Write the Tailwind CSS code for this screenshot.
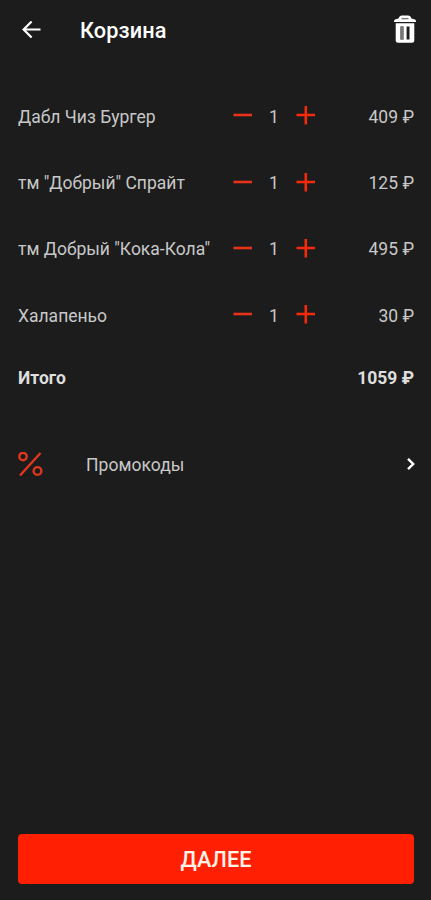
<!DOCTYPE html>
<html lang="ru">
<head>
<meta charset="utf-8">
<meta name="viewport" content="width=device-width, initial-scale=1">
<title>Корзина</title>
<script src="https://cdn.jsdelivr.net/npm/@tailwindcss/browser@4"></script>
</head>
<body class="flex h-[900px] flex-col bg-[#1c1c1c] font-['Roboto','Noto_Sans',sans-serif] text-[#c8c8c8]">
<header class="flex h-[60px] items-center pl-[22px] pr-[14px] text-white">
  <svg class="h-[18px] w-[19px]" viewBox="0 0 19 18" fill="none" stroke="currentColor" stroke-width="2.2"><path d="M9.6 .5 1.6 8.500l8 8M2 8.500h16.5"/></svg>
  <h1 class="ml-[39px] flex-1 pt-px text-[21.700px] leading-[60px] font-medium tracking-[0.1px]">Корзина</h1>
  <svg class="h-[30px] w-[24px]" viewBox="0 0 24 30"><path fill="#fff" fill-rule="evenodd" d="M5.500 3.500Q6.500 .500 9 .500h6q2.500 0 3.500 3L22 4.500q1 .5 1 2V7H1V6.500q0-1.500 1-2ZM2.700 8.200h18.600V25.200q0 2.500-2.500 2.500H5.200Q2.700 27.700 2.700 25.200ZM7.500 11.500v13h2.900v-13ZM13.600 11.500v13h2.900v-13Z"/><path d="M8.500 3.600h7" stroke="#777" stroke-width="1.400"/><path d="M9 11.500v13" stroke="#777" stroke-width="2.900"/></svg>
</header>
<main class="flex flex-1 flex-col pt-[23.500px] pr-[17px] pl-[18px] text-[17.500px]">
  <section>
    <div class="flex h-[66.200px] items-center">
      <span class="w-[215px] pt-px whitespace-nowrap">Дабл Чиз Бургер</span>
      <svg class="mb-px h-[20px] w-[20px]" viewBox="0 0 20 20" stroke="#e6331a" stroke-width="2.600"><path d="M.500 9h18.500"/></svg>
      <span class="w-[43px] pt-px pr-px text-center">1</span>
      <svg class="mb-px h-[20px] w-[20px]" viewBox="0 0 20 20" stroke="#f5290c" stroke-width="2.600"><path d="M.5 9h18.500M9.800 0v18.500"/></svg>
      <span class="flex-1 pt-px text-right">409 ₽</span>
    </div>
    <div class="flex h-[66.200px] items-center">
      <span class="w-[215px] pt-px whitespace-nowrap">тм "Добрый" Спрайт</span>
      <svg class="h-[20px] w-[20px]" viewBox="0 0 20 20" stroke="#e6331a" stroke-width="2.600"><path d="M.500 9h18.500"/></svg>
      <span class="w-[43px] pt-px pr-px text-center">1</span>
      <svg class="h-[20px] w-[20px]" viewBox="0 0 20 20" stroke="#f5290c" stroke-width="2.600"><path d="M.5 9h18.500M9.800 0v18.500"/></svg>
      <span class="flex-1 pt-px text-right">125 ₽</span>
    </div>
    <div class="flex h-[66.200px] items-center">
      <span class="w-[215px] pt-px whitespace-nowrap">тм Добрый "Кока-Кола"</span>
      <svg class="h-[20px] w-[20px]" viewBox="0 0 20 20" stroke="#e6331a" stroke-width="2.600"><path d="M.500 9h18.500"/></svg>
      <span class="w-[43px] pt-px pr-px text-center">1</span>
      <svg class="h-[20px] w-[20px]" viewBox="0 0 20 20" stroke="#f5290c" stroke-width="2.600"><path d="M.5 9h18.500M9.800 0v18.500"/></svg>
      <span class="flex-1 pt-px text-right">495 ₽</span>
    </div>
    <div class="flex h-[66.200px] items-center">
      <span class="w-[215px] pt-px whitespace-nowrap">Халапеньо</span>
      <svg class="h-[20px] w-[20px]" viewBox="0 0 20 20" stroke="#e6331a" stroke-width="2.600"><path d="M.500 9h18.500"/></svg>
      <span class="w-[43px] pt-px pr-px text-center">1</span>
      <svg class="h-[20px] w-[20px]" viewBox="0 0 20 20" stroke="#f5290c" stroke-width="2.600"><path d="M.5 9h18.500M9.800 0v18.500"/></svg>
      <span class="flex-1 pt-px text-right">30 ₽</span>
    </div>
  </section>
  <div class="flex h-[59px] items-center justify-between pt-px font-bold text-[#dedede]">
    <span>Итого</span><span>1059 ₽</span>
  </div>
  <div class="mt-[27.500px] flex h-[60px] items-center">
    <svg class="h-[26px] w-[26px]" viewBox="0 1 26 26" fill="none" stroke="#e0371d" stroke-width="2.400"><circle cx="5" cy="5.500" r="3.700"/><circle cx="19.500" cy="20" r="3.900"/><path d="M22.500 2 2 24.500"/></svg>
    <span class="ml-[42px] flex-1 tracking-[0.050px]">Промокоды</span>
    <svg class="-mr-[3px] h-[14px] w-[12px]" viewBox="0 1 12 14" fill="none" stroke="#fff" stroke-width="2.400"><path d="m3 1.800 5.200 5.200L3 12.200"/></svg>
  </div>
</main>
<footer class="pr-[17px] pb-[16.500px] pl-[18px]">
  <button class="block h-[49.500px] w-full rounded-[4px] bg-[#ff2003] pt-px text-[21.700px] leading-[50px] font-medium text-[#fff3ea]">ДАЛЕЕ</button>
</footer>
</body>
</html>
